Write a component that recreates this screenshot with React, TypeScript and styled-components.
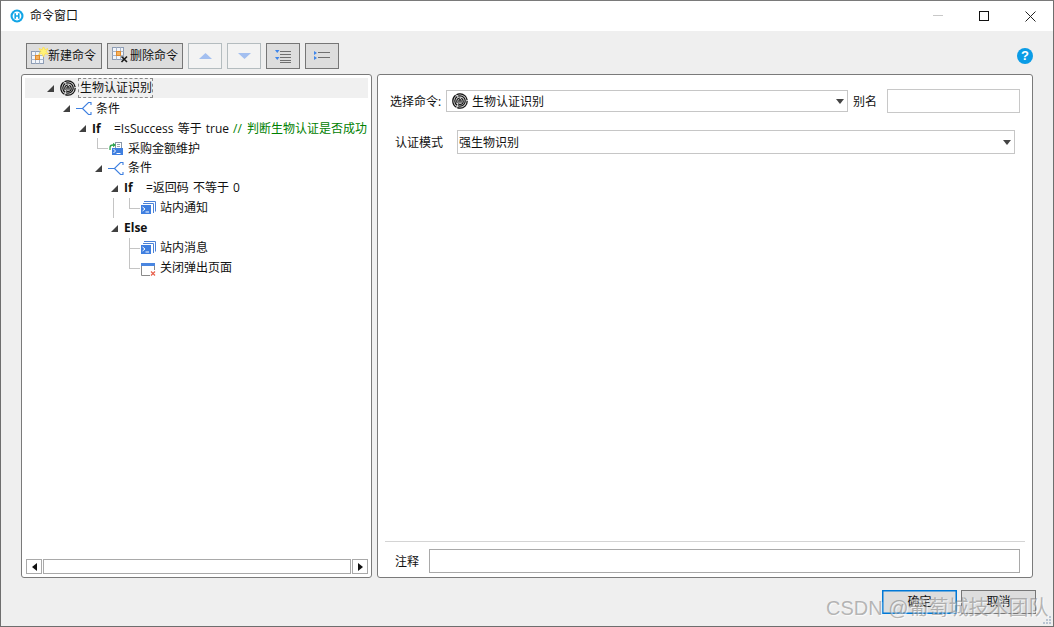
import React from "react";
import styled, { createGlobalStyle } from "styled-components";

const Global = createGlobalStyle`
  * { box-sizing: border-box; }
  html, body { margin: 0; padding: 0; background: #efefef; }
  body { font-family: "Open Sans", "Noto Sans CJK SC", sans-serif; font-size: 12px; color: #111; }
`;

const Window = styled.div`
  position: relative;
  width: 1054px;
  height: 627px;
  display: flex;
  flex-direction: column;
  border: 1px solid #6e6e6e;
  border-top-color: #7a7a7a;
  background: #efefef;
  overflow: hidden;
`;

const TitleBar = styled.div`
  height: 30px;
  flex: none;
  display: flex;
  align-items: center;
  padding-left: 9px;
  background: #fff;
`;

const TitleText = styled.span`
  margin-left: 6px;
  font-size: 12px;
  line-height: 30px;
`;

const WinControls = styled.div`
  margin-left: auto;
  display: flex;
  align-items: center;
`;

const WinButton = styled.div`
  width: 46px;
  height: 30px;
  display: flex;
  align-items: center;
  justify-content: center;
`;

const Body = styled.div`
  flex: 1;
  min-height: 0;
  display: flex;
  flex-direction: column;
  padding: 12px 17px 0 20px;
`;

const Toolbar = styled.div`
  height: 26px;
  flex: none;
  display: flex;
  gap: 5px;
  margin: 0 3px 5px 5px;
  align-items: center;
`;

const ToolButton = styled.div<{ $w: number; $off?: boolean }>`
  width: ${(p) => p.$w}px;
  height: 26px;
  display: flex;
  align-items: center;
  justify-content: ${(p) => (p.$w < 50 ? "center" : "flex-start")};
  padding-left: ${(p) => (p.$w < 50 ? 0 : 4)}px;
  border: 1px solid ${(p) => (p.$off ? "#b4bcbf" : "#767676")};
  background: ${(p) => (p.$off ? "#f3f3f3" : "#dddddd")};
  white-space: nowrap;
  line-height: 24px;
`;

const Help = styled.div`
  margin-left: auto;
  width: 16px;
  height: 16px;
  border-radius: 50%;
  background: #0b9ce6;
  color: #fff;
  font: bold 13px/16px "Liberation Sans", sans-serif;
  text-align: center;
`;

const Panels = styled.div`
  height: 504px;
  flex: none;
  display: flex;
  gap: 5px;
  margin-right: 3px;
`;

const Panel = styled.div`
  background: #fff;
  border: 1px solid #7a7a7a;
  border-radius: 3px;
  display: flex;
  flex-direction: column;
`;

const TreePanel = styled(Panel)`
  width: 351px;
  flex: none;
  padding: 3px;
`;

const TreeArea = styled.div`
  flex: 1;
  min-height: 0;
  overflow: hidden;
`;

const Row = styled.div<{ $level: number; $active?: boolean; $guide?: number; $low?: boolean }>`
  position: relative;
  height: 20px;
  display: flex;
  align-items: center;
  padding-left: ${(p) => 22 + p.$level * 16}px;
  white-space: nowrap;
  line-height: 20px;
  background: ${(p) => (p.$active ? "#f0f0f0" : "transparent")};
  ${(p) => (p.$low ? "& > span, & > b { padding-top: 2px; }" : "")}
  ${(p) =>
    p.$guide !== undefined
      ? `&::before { content: ""; position: absolute; left: ${p.$guide}px; top: 0; bottom: 0; width: 1px; background: #c4c4c4; }`
      : ""}
`;

const Slot = styled.div`
  position: relative;
  width: 13px;
  height: 20px;
  flex: none;
  display: flex;
  align-items: center;
`;

const Connector = styled.div<{ $through?: boolean }>`
  position: absolute;
  left: 2px;
  top: 0;
  width: 10px;
  height: ${(p) => (p.$through ? 20 : 11)}px;
  border-left: 1px solid #c4c4c4;
  &::after {
    content: "";
    position: absolute;
    left: 0;
    top: 10px;
    width: 10px;
    height: 1px;
    background: #c4c4c4;
  }
`;

const NodeText = styled.span<{ $focus?: boolean }>`
  margin-left: ${(p) => (p.$focus ? 2 : 4)}px;
  padding: ${(p) => (p.$focus ? "0 1px 0 2px" : "0")};
  height: ${(p) => (p.$focus ? "20px" : "auto")};
  outline: ${(p) => (p.$focus ? "1px dashed #8a8a8a" : "none")};
  outline-offset: -1px;
`;

const Keyword = styled.b<{ $w: number }>`
  display: inline-block;
  width: ${(p) => p.$w}px;
  font-weight: 700;
  flex: none;
`;

const Expr = styled.span`
  word-spacing: 1px;
`;

const Comment = styled.span`
  color: #008000;
  margin-left: 4px;
  word-spacing: 2px;
`;

const Scrollbar = styled.div`
  height: 15px;
  flex: none;
  display: flex;
  margin-left: 1px;
  gap: 1px;
`;

const ScrollBtn = styled.div`
  width: 16px;
  border: 1px solid #a9a9a9;
  display: flex;
  align-items: center;
  justify-content: center;
`;

const ScrollThumb = styled.div`
  flex: 1;
  border: 1px solid #a9a9a9;
`;

const FormPanel = styled(Panel)`
  flex: 1;
  min-width: 0;
  padding: 14px 12px 4px 12px;
`;

const FormRow = styled.div<{ $top?: number; $inset?: number }>`
  height: 24px;
  flex: none;
  display: flex;
  align-items: center;
  margin-top: ${(p) => p.$top ?? 0}px;
  padding-left: ${(p) => p.$inset ?? 0}px;
`;

const Label = styled.span<{ $w: number; $left?: number }>`
  width: ${(p) => p.$w}px;
  margin-left: ${(p) => p.$left ?? 0}px;
  flex: none;
  white-space: nowrap;
`;

const Combo = styled.div<{ $w: number; $h: number; $pad: number }>`
  position: relative;
  width: ${(p) => p.$w}px;
  height: ${(p) => p.$h}px;
  flex: none;
  display: flex;
  align-items: center;
  padding-left: ${(p) => p.$pad}px;
  border: 1px solid #c6c6c6;
  &::after {
    content: "";
    position: absolute;
    right: 3px;
    top: 50%;
    margin-top: -2px;
    border-style: solid;
    border-width: 5px 4px 0 4px;
    border-color: #444 transparent transparent transparent;
  }
`;

const ComboText = styled.span`
  margin-left: 4px;
`;

const TextBox = styled.input<{ $w?: number; $tone: string; $left?: number }>`
  ${(p) => (p.$w ? `width: ${p.$w}px;` : "flex: 1; min-width: 0;")}
  margin-left: ${(p) => p.$left ?? 0}px;
  height: 24px;
  border: 1px solid ${(p) => p.$tone};
  background: #fff;
  padding: 0 3px;
  outline: none;
  font: inherit;
`;

const Spacer = styled.div`
  flex: 1;
`;

const Separator = styled.div`
  height: 1px;
  flex: none;
  margin: 0 -5px;
  background: #d4d4d4;
`;

const Footer = styled.div`
  display: flex;
  justify-content: flex-end;
  gap: 4px;
  margin-top: 12px;
`;

const DialogButton = styled.div<{ $primary?: boolean }>`
  width: 75px;
  height: 24px;
  border: 1px solid ${(p) => (p.$primary ? "#0078d7" : "#777")};
  box-shadow: ${(p) => (p.$primary ? "inset 0 0 0 0.5px #0078d7" : "none")};
  background: #dddddd;
  text-align: center;
  line-height: 22px;
`;

const Watermark = styled.div`
  position: absolute;
  left: 825px;
  top: 595px;
  font: 20px/24px "Liberation Sans", "Noto Sans CJK SC", sans-serif;
  color: rgba(125, 125, 125, 0.55);
  text-shadow: 1px 1px 1px rgba(255, 255, 255, 0.75);
  white-space: nowrap;
`;

const Grip = styled.svg`
  position: absolute;
  right: 1px;
  bottom: 1px;
`;

const Icon = styled.svg`
  flex: none;
`;

const Arrow = () => (
  <Icon width="7" height="7" viewBox="0 0 7 7">
    <path d="M7 0V7H0Z" fill="#404040" />
  </Icon>
);

const Finger = () => (
  <Icon width="16" height="16" viewBox="0 0 16 16">
    <circle cx="8" cy="8" r="8" fill="#dcdcdc" />
    <g fill="none" stroke="#111" strokeWidth="1.2">
      <circle cx="8" cy="8" r="7.2" strokeDasharray="14 1" />
      <circle cx="8" cy="8" r="5.2" strokeDasharray="10 1" />
      <circle cx="8" cy="8.2" r="3.2" strokeDasharray="7 1" />
      <path d="M7 9.8V7.6c0-1.2 2-1.2 2 0v2.2" />
    </g>
  </Icon>
);

const Branch = () => (
  <Icon width="16" height="16" viewBox="0 0 16 16">
    <path d="M0 8.5H6.5L12.5 2.5H15.5M6.5 8.5L12.5 14.5H15.5M15 2.5V5M15 12V14.5" fill="none" stroke="#3d7fe0" strokeWidth="1.1" />
  </Icon>
);

const Terminal = () => (
  <Icon width="16" height="16" viewBox="0 0 16 16">
    <path d="M4 1.5H15.5V11.5M3 3.5H13.5V13" fill="none" stroke="#4a82d8" strokeWidth="1" />
    <rect x="1" y="5" width="10" height="9" fill="#3f7fe0" />
    <path d="M2.5 7L5 9L2.5 11M5.5 12H9" fill="none" stroke="#fff" strokeWidth="1" />
  </Icon>
);

const Sheet = () => (
  <Icon width="16" height="16" viewBox="0 0 16 16">
    <rect x="7.5" y="2.5" width="6" height="6" fill="#fff" stroke="#8a98a8" />
    <path d="M9 4.5h3M9 6.5h3" stroke="#9aa6b2" />
    <path d="M2 10V7.5C2 6 3 5 5 5" fill="none" stroke="#2ea44f" strokeWidth="1.3" />
    <path d="M5 2.8L8 5L5 7.2Z" fill="#2ea44f" />
    <rect x="4" y="8" width="11" height="7" fill="#3f7fe0" />
    <path d="M5.5 9L7.5 11L5.5 13M8.5 13.5H12.5" fill="none" stroke="#fff" strokeWidth="1" />
  </Icon>
);

const ClosePage = () => (
  <Icon width="16" height="16" viewBox="0 0 16 16">
    <rect x="1" y="3" width="14" height="3" fill="#4a86e0" />
    <path d="M1.5 6V15.5H10M14.5 6V10" fill="none" stroke="#8a8a8a" strokeWidth="1" />
    <path d="M11 11.5L15 15.5M15 11.5L11 15.5" stroke="#e8604c" strokeWidth="1.2" />
  </Icon>
);

const NewIcon = () => (
  <Icon width="17" height="18" viewBox="0 0 17 18">
    <rect x="0.5" y="4.5" width="12" height="12" fill="#f2f5fa" stroke="#8e9db5" />
    <path d="M0.5 8.5H12.5M0.5 12.5H12.5M4.5 4.5V16.5M8.5 4.5V16.5" stroke="#a9b6c9" />
    <rect x="4.5" y="8.5" width="4" height="4" fill="#f5b25c" stroke="#e08a2e" />
    <path d="M12.5 -1L13.8 2.7L17 1.5L15.2 4.5L17.5 7.5L14 6.7L12.5 10L11 6.7L7.5 7.5L9.8 4.5L8 1.5L11.2 2.7Z" fill="#fff27a" stroke="#ffd83a" strokeWidth="0.6" />
  </Icon>
);

const DelIcon = () => (
  <Icon width="18" height="18" viewBox="0 0 18 18">
    <rect x="0.5" y="0.5" width="11" height="12" fill="#f2f5fa" stroke="#8e9db5" />
    <path d="M0.5 4.5H11.5M0.5 8.5H11.5M4.5 0.5V12.5M8.5 0.5V12.5" stroke="#a9b6c9" />
    <rect x="4.5" y="4.5" width="4" height="4" fill="#f5b25c" stroke="#e08a2e" />
    <path d="M9.5 9.5L15 15M15 9.5L9.5 15" stroke="#1a1a1a" strokeWidth="1.6" />
  </Icon>
);

const UpTri = () => (
  <Icon width="13" height="6" viewBox="0 0 13 6"><path d="M6.5 0L13 6H0Z" fill="#a3bff0" /></Icon>
);
const DownTri = () => (
  <Icon width="13" height="6" viewBox="0 0 13 6"><path d="M6.5 6L13 0H0Z" fill="#a3bff0" /></Icon>
);

const ExpandIcon = () => (
  <Icon width="16" height="13" viewBox="0 0 16 13">
    <path d="M0 0H4.5L2.25 3Z M0 7H4.5L2.25 10Z" fill="#3f86ea" />
    <path d="M5 1.5H16M5 4.5H16M5 7.5H16M5 10.5H16M5 12.5H16" stroke="#6f6f6f" strokeWidth="1" />
  </Icon>
);

const CollapseIcon = () => (
  <Icon width="16" height="12" viewBox="0 0 16 12">
    <path d="M0 1V5L3 3Z M0 6V10L3 8Z" fill="#3f86ea" />
    <path d="M4 2.5H16M4 7.5H16" stroke="#6f6f6f" strokeWidth="1" />
  </Icon>
);

export default function App() {
  return (
    <>
      <Global />
      <Window>
        <TitleBar>
          <Icon width="14" height="14" viewBox="0 0 14 14">
            <circle cx="7" cy="7" r="6.5" fill="#12a5e6" />
            <circle cx="7" cy="7" r="4.4" fill="#fff" />
            <path d="M5.2 4.2V9.8M8.8 4.2V9.8M5.2 7H8.8" stroke="#12a5e6" strokeWidth="1.6" />
          </Icon>
          <TitleText>命令窗口</TitleText>
          <WinControls>
            <WinButton>
              <Icon width="10" height="2" viewBox="0 0 10 2"><path d="M0 .5H10" stroke="#c8c8c8" /></Icon>
            </WinButton>
            <WinButton>
              <Icon width="10" height="10" viewBox="0 0 10 10"><rect x=".5" y=".5" width="9" height="9" fill="none" stroke="#111" /></Icon>
            </WinButton>
            <WinButton>
              <Icon width="11" height="11" viewBox="0 0 11 11"><path d="M.5 .5L10.5 10.5M10.5 .5L.5 10.5" stroke="#222" /></Icon>
            </WinButton>
          </WinControls>
        </TitleBar>
        <Body>
          <Toolbar>
            <ToolButton $w={76}><NewIcon /><span>新建命令</span></ToolButton>
            <ToolButton $w={76}><DelIcon /><span>删除命令</span></ToolButton>
            <ToolButton $w={34} $off><UpTri /></ToolButton>
            <ToolButton $w={34} $off><DownTri /></ToolButton>
            <ToolButton $w={34}><ExpandIcon /></ToolButton>
            <ToolButton $w={34}><CollapseIcon /></ToolButton>
            <Help>?</Help>
          </Toolbar>
          <Panels>
            <TreePanel>
              <TreeArea>
                <Row $level={0} $active>
                  <Slot><Arrow /></Slot><Finger /><NodeText $focus>生物认证识别</NodeText>
                </Row>
                <Row $level={1} $low>
                  <Slot><Arrow /></Slot><Branch /><NodeText>条件</NodeText>
                </Row>
                <Row $level={2} $low>
                  <Slot><Arrow /></Slot><Keyword $w={22}>If</Keyword>
                  <Expr>=IsSuccess 等于 true</Expr><Comment>// 判断生物认证是否成功</Comment>
                </Row>
                <Row $level={3} $low>
                  <Slot><Connector /></Slot><Sheet /><NodeText>采购金额维护</NodeText>
                </Row>
                <Row $level={3}>
                  <Slot><Arrow /></Slot><Branch /><NodeText>条件</NodeText>
                </Row>
                <Row $level={4}>
                  <Slot><Arrow /></Slot><Keyword $w={22}>If</Keyword><Expr>=返回码 不等于 0</Expr>
                </Row>
                <Row $level={5} $guide={88}>
                  <Slot><Connector /></Slot><Terminal /><NodeText>站内通知</NodeText>
                </Row>
                <Row $level={4}>
                  <Slot><Arrow /></Slot><Keyword $w={30}>Else</Keyword>
                </Row>
                <Row $level={5}>
                  <Slot><Connector $through /></Slot><Terminal /><NodeText>站内消息</NodeText>
                </Row>
                <Row $level={5}>
                  <Slot><Connector /></Slot><ClosePage /><NodeText>关闭弹出页面</NodeText>
                </Row>
              </TreeArea>
              <Scrollbar>
                <ScrollBtn>
                  <Icon width="5" height="8" viewBox="0 0 5 8"><path d="M5 0V8L0 4Z" fill="#111" /></Icon>
                </ScrollBtn>
                <ScrollThumb />
                <ScrollBtn>
                  <Icon width="5" height="8" viewBox="0 0 5 8"><path d="M0 0V8L5 4Z" fill="#111" /></Icon>
                </ScrollBtn>
              </Scrollbar>
            </TreePanel>
            <FormPanel>
              <FormRow>
                <Label $w={56}>选择命令:</Label>
                <Combo $w={402} $h={22} $pad={5}><Finger /><ComboText>生物认证识别</ComboText></Combo>
                <Label $w={24} $left={5}>别名</Label>
                <TextBox $w={133} $tone="#c8c8c8" $left={10} />
              </FormRow>
              <FormRow $top={17} $inset={5}>
                <Label $w={62}>认证模式</Label>
                <Combo $w={558} $h={24} $pad={1}><span>强生物识别</span></Combo>
              </FormRow>
              <Spacer />
              <Separator />
              <FormRow $top={7} $inset={5}>
                <Label $w={34}>注释</Label>
                <TextBox $tone="#a9a9a9" />
              </FormRow>
            </FormPanel>
          </Panels>
          <Footer>
            <DialogButton $primary>确定</DialogButton>
            <DialogButton>取消</DialogButton>
          </Footer>
        </Body>
        <Grip width="9" height="9" viewBox="0 0 9 9">
          <path d="M6 0h2v2H6z M3 3h2v2H3z M6 3h2v2H6z M0 6h2v2H0z M3 6h2v2H3z M6 6h2v2H6z" fill="#b9c4d2" />
        </Grip>
        <Watermark>CSDN @葡萄城技术团队</Watermark>
      </Window>
    </>
  );
}
